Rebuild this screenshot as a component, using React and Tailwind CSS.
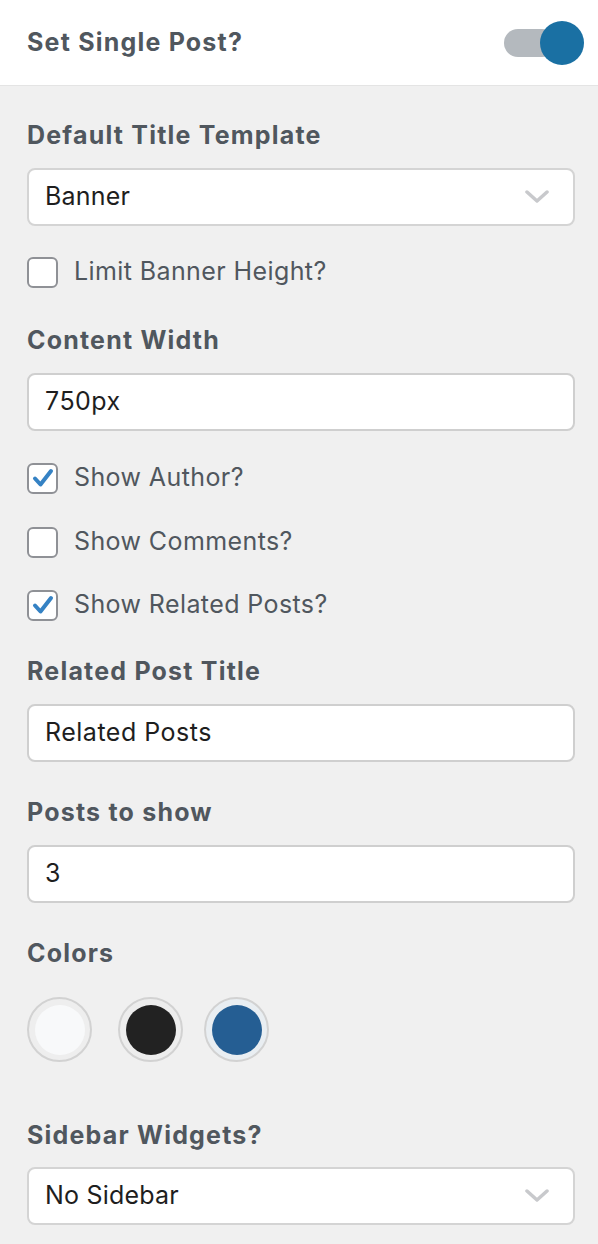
import React, { useState } from "react";

const font = { fontFamily: "Inter, 'Noto Sans', sans-serif" };

function Label({ children, className = "" }) {
  return (
    <div className={"text-[25px] leading-[32px] font-bold tracking-[1.2px] text-[#50575e] " + className}>
      {children}
    </div>
  );
}

function Chevron() {
  return (
    <svg width="24" height="14" viewBox="0 0 24 14" className="shrink-0">
      <path d="M2 2 L12 11 L22 2" fill="none" stroke="#c8c9cc" strokeWidth="3.5" strokeLinecap="round" strokeLinejoin="round" />
    </svg>
  );
}

function Select({ value, className = "" }) {
  return (
    <div className={"h-[58px] bg-white border-2 border-[#d4d4d4] rounded-[8px] flex items-center justify-between pl-[16px] pr-[24px] " + className}>
      <span className="text-[25px] tracking-[0.2px] text-[#1e1e1e]">{value}</span>
      <Chevron />
    </div>
  );
}

function Input({ value, className = "" }) {
  return (
    <div className={"h-[58px] bg-white border-2 border-[#cfcfcf] rounded-[8px] flex items-center pl-[16px] " + className}>
      <span className="text-[25px] tracking-[0.5px] text-[#1e1e1e]">{value}</span>
    </div>
  );
}

function Checkbox({ label, checked, className = "" }) {
  const [on, setOn] = useState(checked);
  return (
    <div className={"h-[32px] flex items-center cursor-pointer " + className} onClick={() => setOn(!on)}>
      <div className="w-[31px] h-[31px] bg-white border-2 border-[#8f9196] rounded-[6px] flex items-center justify-center shrink-0">
        {on && (
          <svg width="22" height="20" viewBox="0 0 22 20">
            <path d="M3 10.5 L8.5 16.5 L19 3" fill="none" stroke="#3582c4" strokeWidth="4" strokeLinecap="round" strokeLinejoin="round" />
          </svg>
        )}
      </div>
      <span className="ml-[16px] text-[25px] tracking-[0.4px] text-[#50575e]">{label}</span>
    </div>
  );
}

function Swatch({ color, ring, className = "" }) {
  return (
    <div className={"w-[65px] h-[65px] rounded-full border-2 border-[#d2d2d2] flex items-center justify-center " + ring + " " + className}>
      <div className={"w-[50px] h-[50px] rounded-full " + color} />
    </div>
  );
}

export default function App() {
  return (
    <div className="w-[598px] min-h-[1244px] bg-[#f0f0f0]" style={font}>
      <div className="h-[86px] bg-white flex items-center justify-between pl-[27px] pr-[14px] border-b border-[#e4e4e4]">
        <span className="text-[25px] font-bold tracking-[1.2px] text-[#50575e]">Set Single Post?</span>
        <div className="flex items-center">
          <div className="w-[52px] h-[28px] bg-[#b4b9be] rounded-full" />
          <div className="w-[44px] h-[44px] rounded-full bg-[#1a70a3] -ml-[16px]" />
        </div>
      </div>

      <div className="pl-[27px] pr-[23px] pt-[33px] pb-[20px]">
        <Label>Default Title Template</Label>
        <Select value="Banner" className="mt-[17px]" />
        <Checkbox label="Limit Banner Height?" className="mt-[30px]" />

        <Label className="mt-[36px]">Content Width</Label>
        <Input value="750px" className="mt-[17px]" />
        <Checkbox label="Show Author?" checked className="mt-[31px]" />
        <Checkbox label="Show Comments?" className="mt-[32px]" />
        <Checkbox label="Show Related Posts?" checked className="mt-[31px]" />

        <Label className="mt-[34px]">Related Post Title</Label>
        <Input value="Related Posts" className="mt-[17px]" />

        <Label className="mt-[34px]">Posts to show</Label>
        <Input value="3" className="mt-[17px]" />

        <Label className="mt-[34px]">Colors</Label>
        <div className="flex mt-[28px]">
          <Swatch color="bg-[#f8f9fa]" ring="bg-[#eeeeee]" />
          <Swatch color="bg-[#222222]" ring="bg-[#ededed]" className="ml-[26px]" />
          <Swatch color="bg-[#255e93]" ring="bg-[#e9eef2]" className="ml-[21px]" />
        </div>

        <Label className="mt-[57px]">Sidebar Widgets?</Label>
        <Select value="No Sidebar" className="mt-[16px]" />
      </div>
    </div>
  );
}
